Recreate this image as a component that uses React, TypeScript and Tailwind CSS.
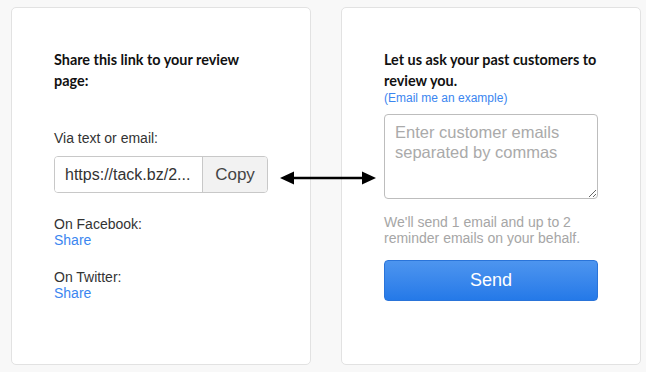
import React from 'react';

const App: React.FC = () => {
  return (
    <div className="w-[646px] h-[372px] bg-[#f8f8f8] flex gap-[30px] pl-[11px] pt-[7px] font-['Liberation_Sans',Arial,sans-serif]">
      {/* Left card */}
      <div className="w-[300px] h-[358px] bg-white border border-[#e2e2e2] rounded-[5px] pl-[42px] pt-[41px] relative">
        <h2 className="w-[200px] font-['Lato',sans-serif] font-bold text-[14.4px] leading-[21px] text-[#111]">
          Share this link to your review page:
        </h2>
        <p className="mt-[39px] text-[14px] leading-[16px] text-[#333]">Via text or email:</p>
        <div className="mt-[10px] flex w-[214px] h-[37px] border border-[#c8c8c8] rounded-[4px] overflow-hidden">
          <div className="flex-1 flex items-center pl-[10px] text-[16px] text-[#333] bg-white">
            https://tack.bz/2...
          </div>
          <button className="w-[65px] border-l border-[#c8c8c8] bg-[#f2f2f2] text-[17px] text-[#444]">Copy</button>
        </div>
        <div className="mt-[23px] text-[14px] leading-[16px]">
          <p className="text-[#333]">On Facebook:</p>
          <a className="text-[#3b86f0]">Share</a>
        </div>
        <div className="mt-[21px] text-[14px] leading-[16px]">
          <p className="text-[#333]">On Twitter:</p>
          <a className="text-[#3b86f0]">Share</a>
        </div>
      </div>

      {/* Arrow between cards */}
      <svg className="absolute left-[280px] top-[169px]" width="96" height="18" viewBox="0 0 96 18">
        <line x1="10" y1="9" x2="86" y2="9" stroke="#000" strokeWidth="2.6" />
        <polygon points="0,9 14,2.5 14,15.5" fill="#000" />
        <polygon points="96,9 82,2.5 82,15.5" fill="#000" />
      </svg>

      {/* Right card */}
      <div className="w-[300px] h-[358px] bg-white border border-[#e2e2e2] rounded-[5px] pl-[42px] pt-[41px]">
        <h2 className="w-[225px] font-['Lato',sans-serif] font-bold text-[14.4px] leading-[21px] text-[#111]">
          Let us ask your past customers to review you.
        </h2>
        <a className="block text-[12px] leading-[14px] text-[#3b86f0]">(Email me an example)</a>
        <textarea
          className="mt-[9px] w-[214px] h-[85px] border border-[#bdbdbd] rounded-[4px] px-[10px] pt-[7px] text-[16.5px] leading-[20px] text-[#333] placeholder:text-[#aaa] resize-y outline-none block"
          placeholder="Enter customer emails separated by commas"
        />
        <p className="mt-[15px] w-[214px] text-[14px] leading-[16px] text-[#a6a6a6]">
          We'll send 1 email and up to 2 reminder emails on your behalf.
        </p>
        <button className="mt-[14px] w-[214px] h-[41px] rounded-[4px] border border-[#2a74d9] bg-gradient-to-b from-[#4d95ef] to-[#2479e8] text-white text-[18px]">
          Send
        </button>
      </div>
    </div>
  );
};

export default App;
